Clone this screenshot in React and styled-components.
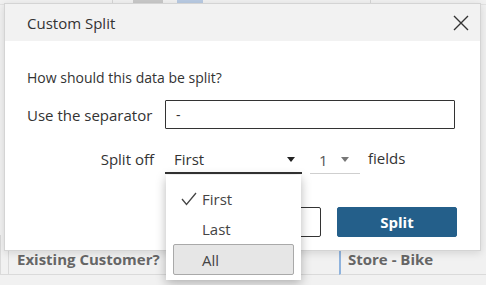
import React from 'react'
import styled, { createGlobalStyle } from 'styled-components'

const GlobalStyles = createGlobalStyle`
  html, body { margin: 0; padding: 0; }
  body {
    font-family: "Open Sans", "Noto Sans", sans-serif;
    color: #333;
    background: #f0f0f0;
  }
`

const Shell = styled.div`
  position: relative;
  width: 486px;
  height: 285px;
  overflow: hidden;
  background: #f1f1f1;
  display: flex;
  flex-direction: column;
`

const TopStrip = styled.div`
  height: 4px;
  display: grid;
  grid-template-columns: 112px 258px 1fr;
  border-bottom: 1px solid #e2e2e2;
`

const StripCell = styled.div`
  border-left: ${(p) => (p.$line ? '1px solid #d6d6d6' : 'none')};
  display: flex;
  gap: 14px;
  padding-left: ${(p) => p.$pad || 0}px;
`

const StripBit = styled.span`
  width: ${(p) => p.$w}px;
  height: 3px;
  background: ${(p) => p.$c};
`

const Table = styled.div`
  margin-top: auto;
  height: 50px;
  display: grid;
  grid-template-columns: 8px 196px 135px 1fr;
  grid-template-rows: 40px 1fr;
`

const Cell = styled.div`
  border-left: ${(p) => (p.$accent ? '2px solid #8fb3dd' : p.$line ? '1px solid #dadada' : 'none')};
  border-bottom: 1px solid #dadada;
  padding: 14px 0 0 ${(p) => p.$pad || 0}px;
  font-size: 15px;
  font-weight: 700;
  color: #666;
  white-space: nowrap;
  overflow: hidden;
`

const Dialog = styled.div`
  position: absolute;
  left: 4px;
  top: 3px;
  width: 477px;
  height: 248px;
  background: #fff;
  border: 1px solid #d4d4d4;
  box-sizing: border-box;
  box-shadow: 0 2px 8px rgba(0, 0, 0, 0.12);
  display: flex;
  flex-direction: column;
`

const Header = styled.div`
  height: 37px;
  flex: none;
  background: #f2f2f2;
  display: flex;
  align-items: center;
  justify-content: space-between;
  padding: 0 10px 0 22px;
`

const Title = styled.span`
  font-size: 15px;
  color: #333;
`

const CloseButton = styled.button`
  border: none;
  background: none;
  padding: 0;
  width: 18px;
  height: 18px;
  display: flex;
  align-items: center;
  justify-content: center;
`

const Body = styled.div`
  padding: 27px 22px 0 22px;
  display: flex;
  flex-direction: column;
`

const Question = styled.p`
  margin: 0;
  font-size: 14px;
  line-height: 19px;
`

const Form = styled.div`
  margin-top: 13px;
  display: grid;
  grid-template-columns: 127px 1fr;
  column-gap: 11px;
  row-gap: 17px;
  align-items: center;
`

const Label = styled.label`
  font-size: 15px;
  text-align: ${(p) => (p.$right ? 'right' : 'left')};
  align-self: ${(p) => (p.$right ? 'start' : 'center')};
  padding-top: ${(p) => (p.$right ? '3px' : '0')};
  white-space: nowrap;
`

const TextInput = styled.div`
  width: 290px;
  height: 29px;
  box-sizing: border-box;
  border: 1px solid #333;
  border-radius: 1px;
  padding-left: 10px;
  display: flex;
  align-items: center;
  font-size: 14px;
`

const SplitRow = styled.div`
  display: flex;
  align-items: flex-start;
  gap: 8px;
`

const Select = styled.div`
  width: ${(p) => p.$w}px;
  height: 28px;
  box-sizing: border-box;
  border-bottom: ${(p) => (p.$active ? '2px solid #333' : '1px solid #cfcfcf')};
  padding: 0 ${(p) => p.$padR}px 0 9px;
  display: flex;
  align-items: center;
  justify-content: space-between;
  font-size: 15px;
  color: ${(p) => (p.$active ? '#333' : '#555')};
  line-height: 24px;
`

const Caret = styled.span`
  width: 0;
  height: 0;
  border-left: 4px solid transparent;
  border-right: 4px solid transparent;
  border-top: 5px solid ${(p) => p.$c};
`

const Unit = styled.span`
  font-size: 15px;
  line-height: 24px;
`

const Buttons = styled.div`
  margin-top: 33px;
  display: flex;
  justify-content: flex-end;
  gap: 16px;
  padding-right: 1px;
`

const Button = styled.button`
  width: 120px;
  height: 30px;
  box-sizing: border-box;
  border-radius: 2px;
  font-family: inherit;
  font-size: 15px;
  font-weight: 700;
  border: 1px solid ${(p) => (p.$primary ? '#245f8a' : '#333')};
  background: ${(p) => (p.$primary ? '#245f8a' : '#fff')};
  color: ${(p) => (p.$primary ? '#fff' : '#333')};
`

const Menu = styled.div`
  position: absolute;
  left: 166px;
  top: 175px;
  width: 135px;
  height: 105px;
  box-sizing: border-box;
  background: #fff;
  box-shadow: 0 3px 10px rgba(0, 0, 0, 0.28);
  padding: 9px 7px 0 7px;
  display: flex;
  flex-direction: column;
`

const MenuItem = styled.div`
  height: ${(p) => (p.$hover ? 31 : 30)}px;
  box-sizing: border-box;
  display: flex;
  align-items: center;
  padding-left: 7px;
  font-size: 15px;
  color: #444;
  border-radius: 2px;
  border: 1px solid ${(p) => (p.$hover ? '#a9a9a9' : 'transparent')};
  background: ${(p) => (p.$hover ? '#e6e6e6' : 'transparent')};
`

const CheckSlot = styled.span`
  width: 21px;
  display: flex;
  align-items: center;
`

const options = [
  { label: 'First', checked: true },
  { label: 'Last' },
  { label: 'All', hover: true },
]

export default function App() {
  return (
    <>
      <GlobalStyles />
      <Shell>
        <TopStrip>
          <StripCell />
          <StripCell $line $pad={20}>
            <StripBit $w={30} $c="#c9c9c9" />
            <StripBit $w={26} $c="#b9cbe3" />
          </StripCell>
          <StripCell $line />
        </TopStrip>
        <Table>
          <Cell $line />
          <Cell $line $pad={8}>Existing Customer?</Cell>
          <Cell $line />
          <Cell $accent $pad={7}>Store - Bike</Cell>
        </Table>

        <Dialog>
          <Header>
            <Title>Custom Split</Title>
            <CloseButton aria-label="Close">
              <svg width="16" height="16" viewBox="0 0 16 16">
                <path d="M1 1 L15 15 M15 1 L1 15" stroke="#333" strokeWidth="1.4" fill="none" />
              </svg>
            </CloseButton>
          </Header>
          <Body>
            <Question>How should this data be split?</Question>
            <Form>
              <Label>Use the separator</Label>
              <TextInput>-</TextInput>
              <Label $right>Split off</Label>
              <SplitRow>
                <Select $active $w={137} $padR={7}>
                  First
                  <Caret $c="#222" />
                </Select>
                <Select $w={50} $padR={11}>
                  1
                  <Caret $c="#777" />
                </Select>
                <Unit>fields</Unit>
              </SplitRow>
            </Form>
            <Buttons>
              <Button>Cancel</Button>
              <Button $primary>Split</Button>
            </Buttons>
          </Body>
        </Dialog>

        <Menu>
          {options.map((o) => (
            <MenuItem key={o.label} $hover={o.hover}>
              <CheckSlot>
                {o.checked && (
                  <svg width="16" height="14" viewBox="0 0 16 14">
                    <path d="M1 7 L5.5 12.5 L15 1" stroke="#444" strokeWidth="1.3" fill="none" />
                  </svg>
                )}
              </CheckSlot>
              {o.label}
            </MenuItem>
          ))}
        </Menu>
      </Shell>
    </>
  )
}
